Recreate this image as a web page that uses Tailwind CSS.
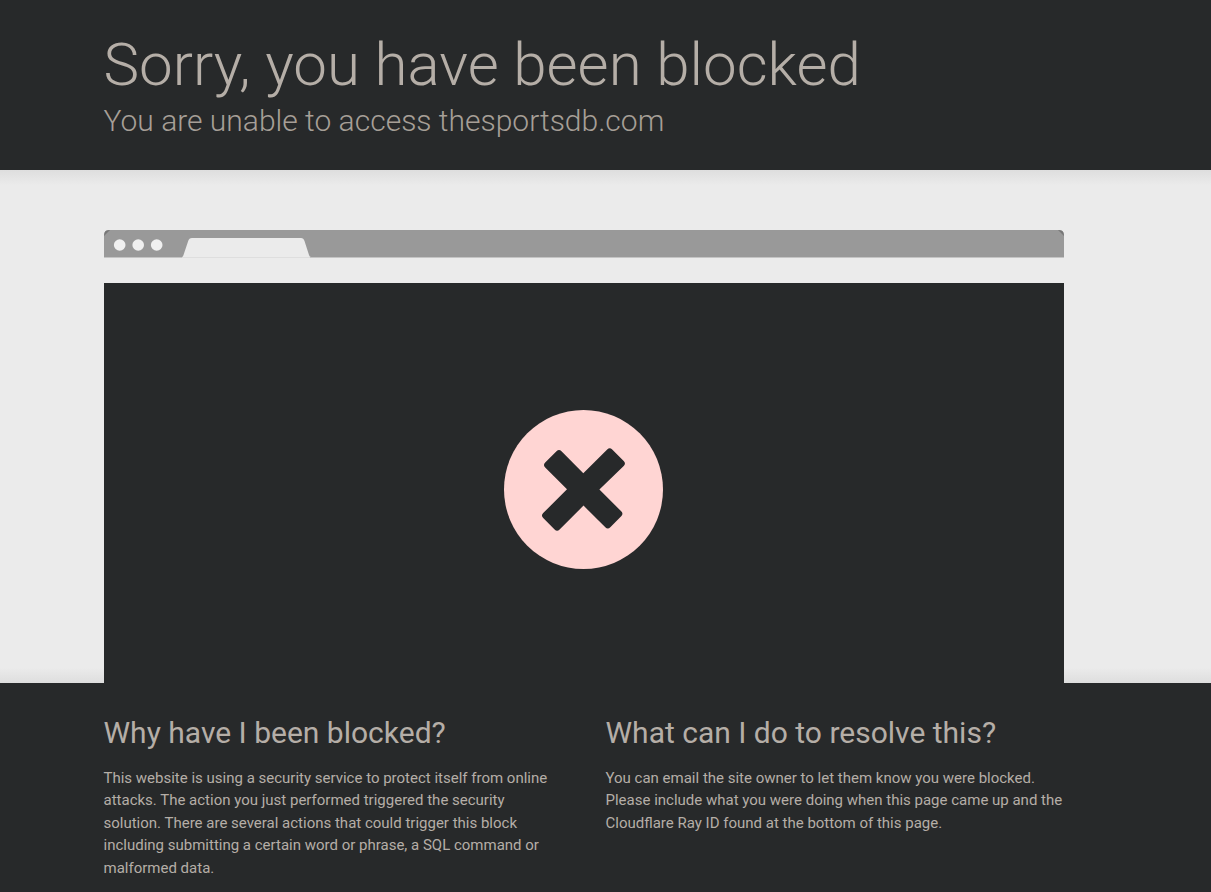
<!DOCTYPE html>
<html lang="en">
<head>
<meta charset="utf-8">
<title>Attention Required!</title>
<script src="https://cdn.jsdelivr.net/npm/@tailwindcss/browser@4"></script>
</head>
<body class="min-h-screen overflow-hidden bg-[#27292a] font-[Roboto,sans-serif] text-[15px] leading-normal text-[#b5aea7]">
<header class="pt-8 pb-[33px]">
<div class="mx-auto max-w-[1004px] pr-11">
<h1 class="text-[60px] leading-[66px] font-light">Sorry, you have been blocked</h1>
<h2 class="mt-[7px] text-[30px] leading-8 font-light text-[#a69f97]">You are unable to access thesportsdb.com</h2>
</div>
</header>
<section class="bg-[#ebebeb] bg-[linear-gradient(to_bottom,#dedede,#ebebeb_3%,#ebebeb_97%,#dedede)] pt-[60px]">
<div class="mx-auto max-w-[1004px] pr-11">
<svg class="block h-[53px] w-full" viewBox="0 0 960 53" preserveAspectRatio="none" aria-hidden="true">
<path fill="#777" d="M0 6V5q0-5 5-5H955q5 0 5 5V6z"/>
<path fill="#999" d="M0 27V6L6 0H954L960 6V27z"/>
<path fill="#c4c4c4" d="M0 27H960V28H0z"/>
<g fill="#f0f0f0"><circle cx="15.7" cy="15" r="5.8"/><circle cx="34.2" cy="15" r="5.8"/><circle cx="52.7" cy="15" r="5.8"/></g>
<path fill="#ebebeb" d="M78 27Q79 27 79.500 25L84.200 11Q85 8 88 8H197Q199.500 8 200.500 11L205 25Q205.500 27 207 27z"/>
<path fill="#dedede" d="M78 27H206V28H78z"/>
</svg>
<div class="flex h-[400px] justify-center bg-[#27292a] pt-[127px]">
<svg class="size-[159px]" viewBox="0 0 159 159" role="img" aria-label="Blocked">
<circle cx="79.5" cy="79.5" r="79.5" fill="#ffd5d3"/>
<path fill="#27292a" d="M52.500 41.300Q55 38.800 57.500 41.300L79.300 63.300L103.200 39.400Q105.700 36.900 108.200 39.400L119.700 50.900Q122.200 53.400 119.700 55.900L95.400 79.500L117.200 101.300Q119.700 103.800 117.200 106.300L106.300 117.200Q103.800 119.700 101.300 117.200L79.500 95.600L55.600 119.500Q53.100 122 50.600 119.500L39.200 108.100Q36.700 105.600 39.200 103.100L63 79.200L41.200 57.600Q38.700 55.100 41.200 52.600z"/>
</svg>
</div>
</div>
</section>
<main class="mx-auto max-w-[1004px] pt-[31px] pr-11">
<div class="grid grid-cols-2 gap-11">
<section>
<h2 class="text-[30px] leading-tight">Why have I been blocked?</h2>
<p class="mt-[15px]">This website is using a security service to protect itself from online attacks. The action you just performed triggered the security solution. There are several actions that could trigger this block including submitting a certain word or phrase, a SQL command or malformed data.</p>
</section>
<section>
<h2 class="text-[30px] leading-tight">What can I do to resolve this?</h2>
<p class="mt-[15px]">You can email the site owner to let them know you were blocked. Please include what you were doing when this page came up and the Cloudflare Ray ID found at the bottom of this page.</p>
</section>
</div>
</main>
</body>
</html>
